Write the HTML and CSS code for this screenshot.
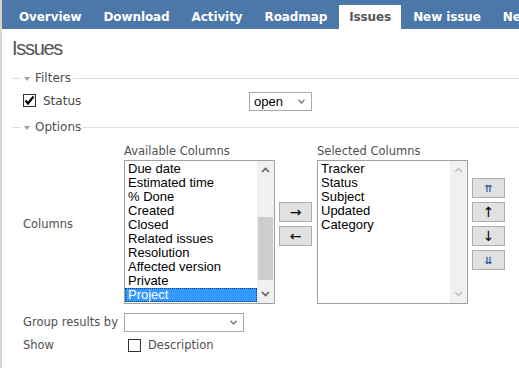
FILE: index.html
```html
<!DOCTYPE html>
<html lang="en">
<head>
    <meta charset="UTF-8">
    <title>Issues</title>
    <link rel="stylesheet" href="styles.css">
</head>
<body>

    <div class="tabs">
        <a class="tab">Overview</a>
        <a class="tab">Download</a>
        <a class="tab">Activity</a>
        <a class="tab">Roadmap</a>
        <a class="tab selected">Issues</a>
        <a class="tab">New issue</a>
        <a class="tab">News</a>
    </div>

    <div class="content">
        <h2>Issues</h2>

        <div class="legend"><span class="toggle"></span>Filters</div>
        <div class="filter-row">
            <span class="check checked">
                <svg width="11" height="11" viewBox="0 0 11 11"><path d="M1.5 5.5 L4 8.5 L9.5 1.5" fill="none" stroke="#000" stroke-width="2.2"/></svg>
            </span>
            <span class="filter-label">Status</span>
            <span class="select status-select">open<svg class="chev" width="7" height="5" viewBox="0 0 7 5"><path d="M0.5 0.8 L3.5 4 L6.5 0.8" fill="none" stroke="#777" stroke-width="1.4"/></svg></span>
        </div>

        <div class="legend options-legend"><span class="toggle"></span>Options</div>

        <div class="option-row columns-row">
            <div class="option-label">Columns</div>
            <div class="columns">
                <div class="col-block">
                    <div class="col-title">Available Columns</div>
                    <div class="listbox">
                        <div class="items">
                            <div class="item">Due date</div>
                            <div class="item">Estimated time</div>
                            <div class="item">% Done</div>
                            <div class="item">Created</div>
                            <div class="item">Closed</div>
                            <div class="item">Related issues</div>
                            <div class="item">Resolution</div>
                            <div class="item">Affected version</div>
                            <div class="item">Private</div>
                            <div class="item active">Project</div>
                        </div>
                        <div class="scrollbar">
                            <svg class="arrow-up" width="9" height="6" viewBox="0 0 9 6"><path d="M1 5 L4.5 1.5 L8 5" fill="none" stroke="#606060" stroke-width="1.6"/></svg>
                            <div class="track"><div class="thumb"></div></div>
                            <svg class="arrow-down" width="9" height="6" viewBox="0 0 9 6"><path d="M1 1 L4.5 4.5 L8 1" fill="none" stroke="#606060" stroke-width="1.6"/></svg>
                        </div>
                    </div>
                </div>

                <div class="buttons move-buttons">
                    <span class="btn">&rarr;</span>
                    <span class="btn">&larr;</span>
                </div>

                <div class="col-block">
                    <div class="col-title">Selected Columns</div>
                    <div class="listbox">
                        <div class="items">
                            <div class="item">Tracker</div>
                            <div class="item">Status</div>
                            <div class="item">Subject</div>
                            <div class="item">Updated</div>
                            <div class="item">Category</div>
                        </div>
                        <div class="scrollbar disabled">
                            <svg class="arrow-up" width="9" height="6" viewBox="0 0 9 6"><path d="M1 5 L4.5 1.5 L8 5" fill="none" stroke="#c4c4c4" stroke-width="1.6"/></svg>
                            <div class="track"></div>
                            <svg class="arrow-down" width="9" height="6" viewBox="0 0 9 6"><path d="M1 1 L4.5 4.5 L8 1" fill="none" stroke="#c4c4c4" stroke-width="1.6"/></svg>
                        </div>
                    </div>
                </div>

                <div class="buttons order-buttons">
                    <span class="btn small">&#8648;</span>
                    <span class="btn">&uarr;</span>
                    <span class="btn">&darr;</span>
                    <span class="btn small">&#8650;</span>
                </div>
            </div>
        </div>

        <div class="option-row group-row">
            <div class="option-label">Group results by</div>
            <span class="select group-select"><svg class="chev" width="7" height="5" viewBox="0 0 7 5"><path d="M0.5 0.8 L3.5 4 L6.5 0.8" fill="none" stroke="#777" stroke-width="1.4"/></svg></span>
        </div>

        <div class="option-row show-row">
            <div class="option-label">Show</div>
            <span class="check"></span>
            <span class="show-label">Description</span>
        </div>
    </div>

</body>
</html>
```

FILE: styles.css
```css
body {
    margin: 0;
    min-height: 368px;
    font-family: "DejaVu Sans", Verdana, sans-serif;
    font-size: 11px;
    color: #505050;
    background-color: #ffffff;
    border-left: 2px solid #d9d3ca;
    box-sizing: border-box;
}

.tabs {
    display: flex;
    align-items: flex-end;
    height: 29px;
    padding-left: 7px;
    background-color: #4b77a9;
    white-space: nowrap;
    overflow: hidden;
}

.tab {
    flex: none;
    height: 24px;
    line-height: 24px;
    margin-right: 2px;
    padding: 0 10px;
    font-size: 12px;
    font-weight: bold;
    letter-spacing: -0.1px;
    color: #ffffff;
}

.tab.selected {
    background-color: #ffffff;
    color: #555;
}

.content {
    padding-left: 10px;
}

h2 {
    margin: 8px 0 0;
    height: 22px;
    line-height: 22px;
    font-family: "Liberation Sans", Arial, sans-serif;
    font-size: 20px;
    font-weight: normal;
    letter-spacing: -1.3px;
    color: #555;
}

.legend {
    display: flex;
    align-items: center;
    height: 14px;
    margin-top: 12px;
    font-size: 12px;
    color: #505050;
}

.legend::before {
    content: "";
    width: 9px;
    height: 1px;
    margin-right: 3px;
    background-color: #dddddd;
}

.legend::after {
    content: "";
    flex: 1;
    height: 1px;
    margin-left: 2px;
    background-color: #dddddd;
}

.toggle {
    width: 0;
    height: 0;
    margin: 1px 5px 0 0;
    border-left: 3.5px solid transparent;
    border-right: 3.5px solid transparent;
    border-top: 4px solid #a0a0a0;
}

.options-legend {
    margin-top: 9px;
}

.filter-row {
    display: flex;
    align-items: center;
    height: 20px;
    margin-top: 6px;
    padding-left: 11px;
}

.check {
    flex: none;
    display: flex;
    align-items: center;
    justify-content: center;
    width: 13px;
    height: 13px;
    box-sizing: border-box;
    border: 1px solid #333;
    background-color: #ffffff;
}

.filter-row .check {
    margin-top: -2px;
}

.filter-label {
    width: 213px;
    padding-left: 7px;
    box-sizing: border-box;
    font-size: 12px;
    color: #484848;
}

.select {
    display: flex;
    align-items: center;
    justify-content: space-between;
    height: 19px;
    box-sizing: border-box;
    padding: 0 6px 0 4px;
    border: 1px solid #a9a9a9;
    background-color: #ffffff;
    font-family: "Liberation Sans", Arial, sans-serif;
    font-size: 13px;
    color: #000;
}

.select .chev {
    margin-left: auto;
}

.status-select {
    width: 63px;
}

.option-row {
    display: flex;
    align-items: center;
    padding-left: 11px;
}

.option-label {
    flex: none;
    width: 101px;
    font-size: 11.5px;
    color: #505050;
}

.columns-row {
    margin-top: 10px;
}

.columns {
    display: flex;
    align-items: flex-start;
}

.col-title {
    height: 14px;
    line-height: 14px;
    margin-bottom: 2px;
    font-size: 11.5px;
    color: #505050;
}

.listbox {
    display: flex;
    width: 151px;
    height: 144px;
    box-sizing: border-box;
    border: 1px solid #a0a0a0;
    background-color: #ffffff;
}

.items {
    flex: 1;
    padding-top: 1px;
    font-family: "Liberation Sans", Arial, sans-serif;
    font-size: 13px;
    color: #000;
}

.item {
    height: 14px;
    line-height: 14px;
    padding-left: 3px;
    white-space: nowrap;
}

.item.active {
    background-color: #3399ff;
    color: #ffffff;
    outline: 1px dotted #0c3f80;
    outline-offset: -1px;
}

.scrollbar {
    display: flex;
    flex-direction: column;
    align-items: center;
    width: 17px;
    background-color: #f0f0f0;
}

.arrow-up {
    margin: 6px 0 5px;
}

.arrow-down {
    margin: 5px 0 6px;
}

.track {
    flex: 1;
    display: flex;
    flex-direction: column;
    justify-content: flex-end;
    width: 100%;
}

.thumb {
    height: 63px;
    margin: 0 1px 6px;
    background-color: #cdcdcd;
}

.buttons {
    display: flex;
    flex-direction: column;
    gap: 4px;
}

.move-buttons {
    margin: 58px 5px 0 4px;
}

.order-buttons {
    margin: 34px 0 0 4px;
}

.btn {
    display: flex;
    align-items: center;
    justify-content: center;
    width: 33px;
    height: 20px;
    box-sizing: border-box;
    border: 1px solid #adadad;
    background-color: #e1e1e1;
    font-size: 14px;
    color: #000;
}

.btn.small {
    font-size: 10px;
    font-weight: bold;
    color: #3a5fa8;
}

.group-row {
    margin-top: 8px;
    height: 20px;
}

.group-select {
    width: 120px;
}

.show-row {
    margin-top: 4px;
    height: 18px;
}

.show-row .check {
    margin-left: 4px;
    border-color: #333;
}

.show-label {
    padding-left: 7px;
    font-size: 11.5px;
    color: #505050;
}
```
